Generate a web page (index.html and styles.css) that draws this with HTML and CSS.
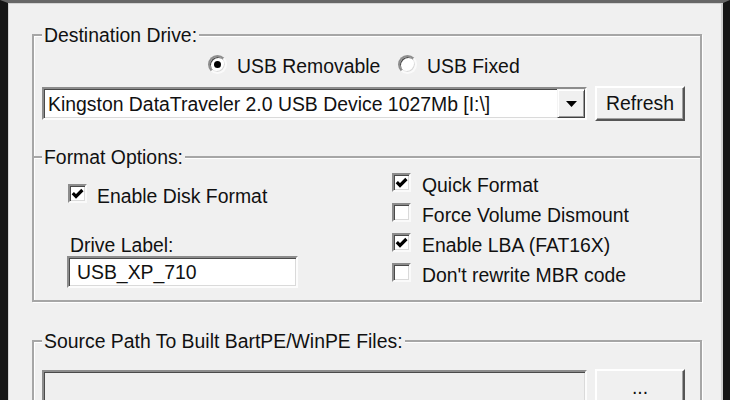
FILE: index.html
```html
<!DOCTYPE html>
<html>
<head>
<meta charset="utf-8">
<title>USB Prep</title>
<link rel="stylesheet" href="styles.css">
</head>
<body>
<div class="window">
  <fieldset class="group group-dest">
    <legend>Destination Drive:</legend>
    <div class="radio-row">
      <label class="opt opt-first"><span class="radio on"></span><span class="txt">USB Removable</span></label>
      <label class="opt"><span class="radio"></span><span class="txt">USB Fixed</span></label>
    </div>
    <div class="drive-row">
      <div class="combo sunken">
        <span class="combo-text">Kingston DataTraveler 2.0 USB Device 1027Mb [I:\]</span>
        <span class="combo-btn"><svg width="11" height="6" viewBox="0 0 11 6"><polygon points="0,0 11,0 5.5,6" fill="#000"/></svg></span>
      </div>
      <button class="btn btn-refresh">Refresh</button>
    </div>
  </fieldset>

  <fieldset class="group group-format">
    <legend>Format Options:</legend>
    <div class="format-grid">
      <div class="col-left">
        <label class="check-row row-enable"><span class="cbox"><svg width="13" height="13" viewBox="0 0 13 13"><polyline points="1.8,6.2 5,9.4 11.4,3" fill="none" stroke="#000" stroke-width="3.2"/></svg></span><span class="txt">Enable Disk Format</span></label>
        <div class="field-label">Drive Label:</div>
        <div class="textbox sunken">USB_XP_710</div>
      </div>
      <div class="col-right">
        <label class="check-row"><span class="cbox"><svg width="13" height="13" viewBox="0 0 13 13"><polyline points="1.8,6.2 5,9.4 11.4,3" fill="none" stroke="#000" stroke-width="3.2"/></svg></span><span class="txt">Quick Format</span></label>
        <label class="check-row"><span class="cbox"></span><span class="txt">Force Volume Dismount</span></label>
        <label class="check-row"><span class="cbox"><svg width="13" height="13" viewBox="0 0 13 13"><polyline points="1.8,6.2 5,9.4 11.4,3" fill="none" stroke="#000" stroke-width="3.2"/></svg></span><span class="txt">Enable LBA (FAT16X)</span></label>
        <label class="check-row"><span class="cbox"></span><span class="txt">Don't rewrite MBR code</span></label>
      </div>
    </div>
  </fieldset>

  <fieldset class="group group-source">
    <legend>Source Path To Built BartPE/WinPE Files:</legend>
    <div class="source-row">
      <div class="source-box sunken"></div>
      <button class="btn btn-browse">...</button>
    </div>
  </fieldset>
</div>
</body>
</html>
```

FILE: styles.css
```css
html, body {
  margin: 0;
  padding: 0;
  background: #f0f0f0;
}

body {
  width: 730px;
  height: 400px;
  overflow: hidden;
  font-family: "Liberation Sans", Arial, sans-serif;
  font-size: 19.4px;
  color: #111;
}

.window {
  box-sizing: border-box;
  width: 730px;
  height: 400px;
  overflow: hidden;
  background: #f0f0f0;
  border-top: 3px solid #676767;
  border-left: 8px solid #161616;
  border-right: 7px solid #161616;
  box-shadow: inset 1px 1px 0 #d4d4d4, inset -2px 0 0 #cfcfcf;
  padding: 21px 21px 0 24px;
}

/* group boxes */
.group {
  margin: 0;
  min-width: 0;
  padding: 0 14px 0 8px;
  border: 2px solid #a6a6a6;
  box-shadow: inset 1px 1px 0 #fff, 1px 1px 0 #fff;
}

.group legend {
  margin: 0;
  padding: 0 2px;
  height: 22px;
  line-height: 22px;
  background: #f0f0f0;
}

.group-dest {
  border-bottom: none;
  padding-bottom: 36px;
}

.group-format {
  margin-top: -11px;
  padding-bottom: 12px;
}

.group-source {
  margin-top: 28px;
  padding-bottom: 20px;
}

/* radio row */
.radio-row {
  display: flex;
  height: 24px;
  margin-top: 6px;
  margin-left: 166px;
}

.opt {
  display: flex;
  align-items: center;
  gap: 10px;
}

.opt-first {
  width: 190px;
}

.txt {
  padding-top: 5px;
  line-height: 22px;
  white-space: nowrap;
}

.radio-row .txt {
  padding-top: 3px;
}

.radio {
  position: relative;
  box-sizing: border-box;
  width: 19px;
  height: 19px;
  flex: none;
  border-radius: 50%;
  background: #fff;
  border: 2px solid;
  border-color: #8c8c8c #fafafa #fafafa #8c8c8c;
  box-shadow: inset 1px 1px 0 #4a4a4a, inset -1px -1px 0 #dadada;
}

.radio.on::after {
  content: "";
  position: absolute;
  left: 50%;
  top: 50%;
  width: 7px;
  height: 7px;
  margin: -3.5px 0 0 -3.5px;
  border-radius: 50%;
  background: #000;
}

/* sunken fields */
.sunken {
  box-sizing: border-box;
  background: #fff;
  border: 2px solid;
  border-color: #8c8c8c #fcfcfc #fcfcfc #8c8c8c;
  box-shadow: inset 1px 1px 0 #4a4a4a, inset -1px -1px 0 #dadada;
}

.drive-row {
  display: flex;
  align-items: center;
  gap: 8px;
  margin-top: 10px;
  height: 35px;
}

.combo {
  display: flex;
  width: 545px;
  height: 33px;
}

.combo-text {
  flex: 1;
  display: flex;
  align-items: center;
  padding: 1px 0 0 4px;
  white-space: nowrap;
  overflow: hidden;
}

.combo-btn {
  box-sizing: border-box;
  width: 28px;
  height: 29px;
  flex: none;
  display: flex;
  align-items: center;
  justify-content: center;
  background: #f0f0f0;
  border: 1px solid;
  border-color: #f4f4f4 #404040 #404040 #f4f4f4;
  box-shadow: inset 1px 1px 0 #fff, inset -1px -1px 0 #9a9a9a;
}

/* buttons */
.btn {
  box-sizing: border-box;
  margin: 0;
  padding: 0;
  font: inherit;
  color: #111;
  background: #f0f0f0;
  border: 2px solid;
  border-color: #fff #555 #555 #fff;
  box-shadow: inset -1px -1px 0 #a0a0a0;
  height: 35px;
  width: 90px;
  flex: none;
}

/* format options */
.format-grid {
  display: grid;
  grid-template-columns: 324px 1fr;
  margin-left: 26px;
}

.check-row {
  display: flex;
  align-items: center;
  gap: 10px;
  height: 30px;
}

.row-enable {
  margin-top: 10px;
}

.col-right {
  margin-top: -1px;
}

.col-right .check-row {
  gap: 11px;
}

.cbox {
  box-sizing: border-box;
  width: 19px;
  height: 19px;
  flex: none;
  display: flex;
  align-items: center;
  justify-content: center;
  background: #fff;
  border: 2px solid;
  border-color: #8c8c8c #fafafa #fafafa #8c8c8c;
  box-shadow: inset 1px 1px 0 #4a4a4a, inset -1px -1px 0 #dadada;
}

.field-label {
  margin-top: 26px;
  padding-left: 2px;
  line-height: 22px;
}

.textbox {
  width: 231px;
  height: 32px;
  margin-left: -1px;
  display: flex;
  align-items: center;
  padding: 1px 0 0 8px;
}

/* source path */
.source-row {
  display: flex;
  align-items: flex-start;
  gap: 8px;
  margin-top: 17px;
}

.source-box {
  width: 545px;
  height: 34px;
  margin-top: 1px;
  background: #efefef;
}

.btn-browse {
  line-height: 20px;
}
```
